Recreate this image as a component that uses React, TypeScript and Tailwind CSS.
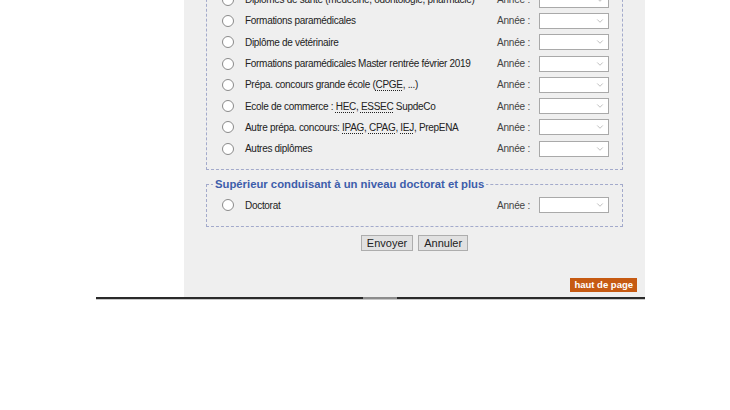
import React from "react";
import { ChevronDown } from "lucide-react";

type Part = string | { abbr: string };

const rows: Part[][] = [
  ["Diplômes de santé (médecine, odontologie, pharmacie)"],
  ["Formations paramédicales"],
  ["Diplôme de vétérinaire"],
  ["Formations paramédicales Master rentrée février 2019"],
  ["Prépa. concours grande école (", { abbr: "CPGE" }, ", ...)"],
  ["Ecole de commerce : ", { abbr: "HEC" }, ", ", { abbr: "ESSEC" }, " SupdeCo"],
  ["Autre prépa. concours: ", { abbr: "IPAG" }, ", ", { abbr: "CPAG" }, ", ", { abbr: "IEJ" }, ", PrepENA"],
  ["Autres diplômes"],
];

function Row({ parts }: { parts: Part[] }) {
  return (
    <div className="flex h-[21.3px] items-center">
      <span className="ml-[15px] h-[12px] w-[12px] shrink-0 rounded-full border border-[#8a8a8a] bg-white" />
      <span className="ml-[11px] w-[252px] whitespace-nowrap text-[10px] tracking-[-0.3px] text-[#222]">
        {parts.map((p, i) =>
          typeof p === "string" ? (
            <span key={i}>{p}</span>
          ) : (
            <span key={i} className="underline decoration-dotted underline-offset-2">
              {p.abbr}
            </span>
          )
        )}
      </span>
      <span className="w-[42px] text-[10px] tracking-[-0.2px] text-[#444]">Année :</span>
      <div className="flex h-[16px] w-[70px] items-center justify-end border border-[#a9a9a9] bg-white pr-[3px]">
        <ChevronDown className="h-[10px] w-[10px] text-[#999]" strokeWidth={1.5} />
      </div>
    </div>
  );
}

export default function App() {
  return (
    <div className="h-[410px] w-[730px] overflow-hidden bg-white font-['Liberation_Sans',Arial,sans-serif]">
      <div className="ml-[96px] w-[549px]">
        <div className="ml-[88px] flex w-[461px] flex-col bg-[#efefef]">
          {/* fieldset continues from above the fold */}
          <div className="mx-[22px] -mt-[11px] border border-t-0 border-dashed border-[#a3aacb] pb-[10px]">
            {rows.map((r, i) => (
              <Row key={i} parts={r} />
            ))}
          </div>

          <fieldset className="mx-[22px] mt-[7px] border border-dashed border-[#a3aacb] px-0 pb-[10px] pt-[3px]">
            <legend className="ml-[6px] px-[2px] text-[11.3px] font-bold leading-[14px] text-[#3d5dab]">
              Supérieur conduisant à un niveau doctorat et plus
            </legend>
            <Row parts={["Doctorat"]} />
          </fieldset>

          <div className="mt-[8px] flex justify-center gap-[5px]">
            <button className="h-[16px] border border-[#adadad] bg-[#e1e1e1] px-[5px] text-[11px] leading-[14px] text-[#222]">
              Envoyer
            </button>
            <button className="h-[16px] border border-[#adadad] bg-[#e1e1e1] px-[5px] text-[11px] leading-[14px] text-[#222]">
              Annuler
            </button>
          </div>

          <div className="mb-[5px] mr-[8px] mt-[27px] flex justify-end">
            <span className="bg-[#c65a12] px-[4px] text-[9.5px] font-bold leading-[14px] text-white">
              haut de page
            </span>
          </div>
        </div>
        <div className="flex h-[2px]">
          <div className="w-[267px] bg-[#2a2a2a]" />
          <div className="w-[34px] bg-[#8c8c8c]" />
          <div className="flex-1 bg-[#2a2a2a]" />
        </div>
        <div className="h-[1px] bg-[#c8c8c8]" />
      </div>
    </div>
  );
}
